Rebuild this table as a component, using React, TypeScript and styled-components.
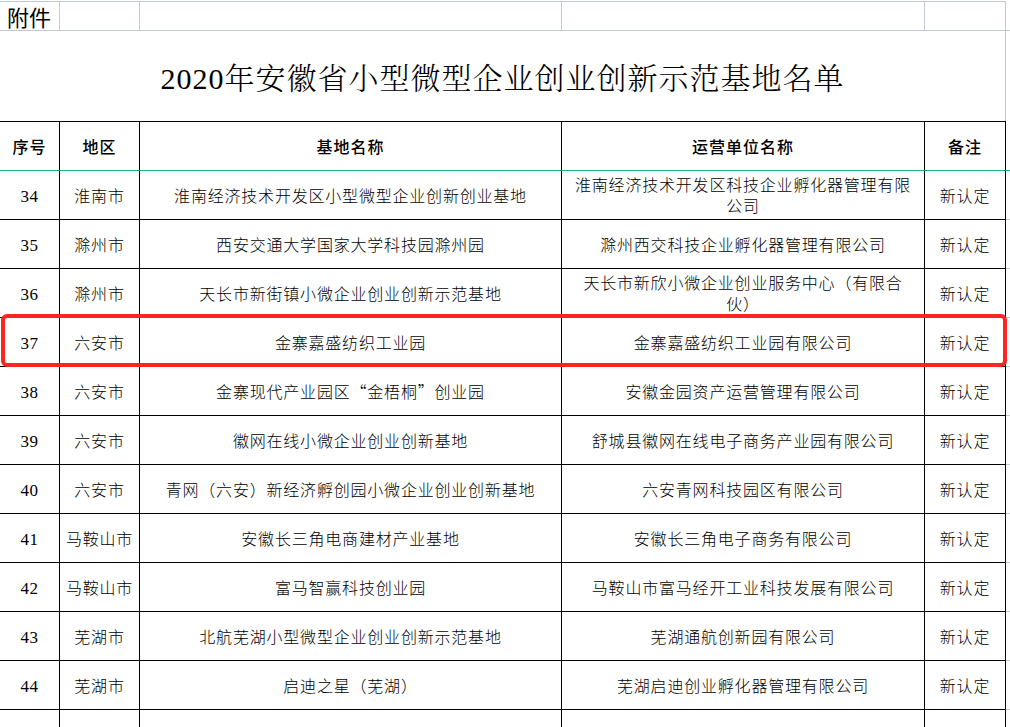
import React from "react";
import styled, { createGlobalStyle, css } from "styled-components";

const GlobalStyle = createGlobalStyle`
  html, body { margin: 0; padding: 0; background: #ffffff; }
  body {
    font-family: "Noto Sans CJK SC", sans-serif;
    color: #000;
    overflow: hidden;
  }
  #root { width: 1010px; height: 727px; }
`;

const GRID = "#c3c8d9";
const GREEN = "#22b573";

const Sheet = styled.div`
  position: relative;
  width: 1010px;
  height: 727px;
  overflow: hidden;
  padding-top: 1px;
  box-sizing: border-box;
`;

const Grid = styled.div`
  display: grid;
  grid-template-columns: 60px 80px 422px 363px 81px 4px;
`;

type Kind = "top" | "head" | "body";

const Cell = styled.div<{ $kind: Kind; $edge?: boolean; $num?: boolean }>`
  box-sizing: border-box;
  display: flex;
  align-items: center;
  justify-content: center;
  text-align: center;
  font-family: "Noto Sans CJK SC", sans-serif;
  font-size: 16px;
  line-height: 21px;
  letter-spacing: 0.8px;
  padding: 0 2px;
  font-weight: 300;
  white-space: nowrap;
  ${(p) =>
    p.$num &&
    css`
      font-family: "Liberation Serif", serif;
      font-weight: 400;
      font-size: 17px;
      letter-spacing: 0.5px;
      padding-top: 2px;
    `}
  ${(p) =>
    p.$kind === "top" &&
    css`
      height: 30px;
      border-top: 1px solid ${GRID};
      border-bottom: 1px solid ${GRID};
      border-right: 1px solid ${GRID};
      justify-content: flex-start;
      padding: 0 0 0 7px;
    `}
  ${(p) =>
    p.$kind === "head" &&
    css`
      height: 50px;
      border-top: 1px solid #000;
      border-bottom: 1px solid ${GREEN};
      border-right: 1px solid #000;
      font-weight: 500;
      letter-spacing: 1px;
    `}
  ${(p) =>
    p.$kind === "body" &&
    css`
      height: 49px;
      border-bottom: 1px solid #000;
      border-right: 1px solid #000;
    `}
  ${(p) =>
    p.$edge &&
    css`
      border-top-color: transparent;
      border-right: none;
      border-bottom-color: ${p.$kind === "head" ? GREEN : GRID};
      padding: 0;
    `}
`;

const Attach = styled.span`
  font-family: "Noto Sans CJK SC", sans-serif;
  font-size: 22px;
  font-weight: 400;
  letter-spacing: 0;
  line-height: 28px;
`;

const TitleCell = styled.div`
  grid-column: 1 / 6;
  box-sizing: border-box;
  height: 90px;
  border-right: 1px solid ${GRID};
  display: flex;
  align-items: center;
  justify-content: center;
  padding-top: 6px;
`;

const EdgeFill = styled.div`
  height: 90px;
`;

const Title = styled.h1`
  margin: 0;
  font-family: "Liberation Serif", "Noto Serif CJK SC", "Noto Sans CJK SC", serif;
  font-size: 30px;
  font-weight: 300;
  line-height: 36px;
  letter-spacing: 1px;
`;

const Highlight = styled.div`
  position: absolute;
  left: 1px;
  top: 314px;
  width: 1006px;
  height: 53px;
  box-sizing: border-box;
  border: 4px solid #ff2424;
  border-radius: 6px;
  pointer-events: none;
`;

type Row = { no: string; region: string; base: React.ReactNode; op: React.ReactNode; note: string };

const rows: Row[] = [
  {
    no: "34",
    region: "淮南市",
    base: "淮南经济技术开发区小型微型企业创新创业基地",
    op: (
      <>
        淮南经济技术开发区科技企业孵化器管理有限
        <br />
        公司
      </>
    ),
    note: "新认定",
  },
  { no: "35", region: "滁州市", base: "西安交通大学国家大学科技园滁州园", op: "滁州西交科技企业孵化器管理有限公司", note: "新认定" },
  {
    no: "36",
    region: "滁州市",
    base: "天长市新街镇小微企业创业创新示范基地",
    op: (
      <>
        天长市新欣小微企业创业服务中心（有限合
        <br />
        伙）
      </>
    ),
    note: "新认定",
  },
  { no: "37", region: "六安市", base: "金寨嘉盛纺织工业园", op: "金寨嘉盛纺织工业园有限公司", note: "新认定" },
  { no: "38", region: "六安市", base: "金寨现代产业园区“金梧桐”创业园", op: "安徽金园资产运营管理有限公司", note: "新认定" },
  { no: "39", region: "六安市", base: "徽网在线小微企业创业创新基地", op: "舒城县徽网在线电子商务产业园有限公司", note: "新认定" },
  { no: "40", region: "六安市", base: "青网（六安）新经济孵创园小微企业创业创新基地", op: "六安青网科技园区有限公司", note: "新认定" },
  { no: "41", region: "马鞍山市", base: "安徽长三角电商建材产业基地", op: "安徽长三角电子商务有限公司", note: "新认定" },
  { no: "42", region: "马鞍山市", base: "富马智赢科技创业园", op: "马鞍山市富马经开工业科技发展有限公司", note: "新认定" },
  { no: "43", region: "芜湖市", base: "北航芜湖小型微型企业创业创新示范基地", op: "芜湖通航创新园有限公司", note: "新认定" },
  { no: "44", region: "芜湖市", base: "启迪之星（芜湖）", op: "芜湖启迪创业孵化器管理有限公司", note: "新认定" },
  { no: "45", region: "芜湖市", base: "芜湖市鸠江区电子商务产业园", op: "芜湖市鸠江电子商务产业园管理有限公司", note: "新认定" },
];

export default function App() {
  return (
    <>
      <GlobalStyle />
      <Sheet>
        <Grid>
          <Cell $kind="top">
            <Attach>附件</Attach>
          </Cell>
          <Cell $kind="top" />
          <Cell $kind="top" />
          <Cell $kind="top" />
          <Cell $kind="top" />
          <Cell $kind="top" $edge />

          <TitleCell>
            <Title>2020年安徽省小型微型企业创业创新示范基地名单</Title>
          </TitleCell>
          <EdgeFill />

          <Cell $kind="head">序号</Cell>
          <Cell $kind="head">地区</Cell>
          <Cell $kind="head">基地名称</Cell>
          <Cell $kind="head">运营单位名称</Cell>
          <Cell $kind="head">备注</Cell>
          <Cell $kind="head" $edge />

          {rows.map((r) => (
            <React.Fragment key={r.no}>
              <Cell $kind="body" $num>
                {r.no}
              </Cell>
              <Cell $kind="body">{r.region}</Cell>
              <Cell $kind="body">{r.base}</Cell>
              <Cell $kind="body">{r.op}</Cell>
              <Cell $kind="body">{r.note}</Cell>
              <Cell $kind="body" $edge />
            </React.Fragment>
          ))}
        </Grid>
        <Highlight />
      </Sheet>
    </>
  );
}
